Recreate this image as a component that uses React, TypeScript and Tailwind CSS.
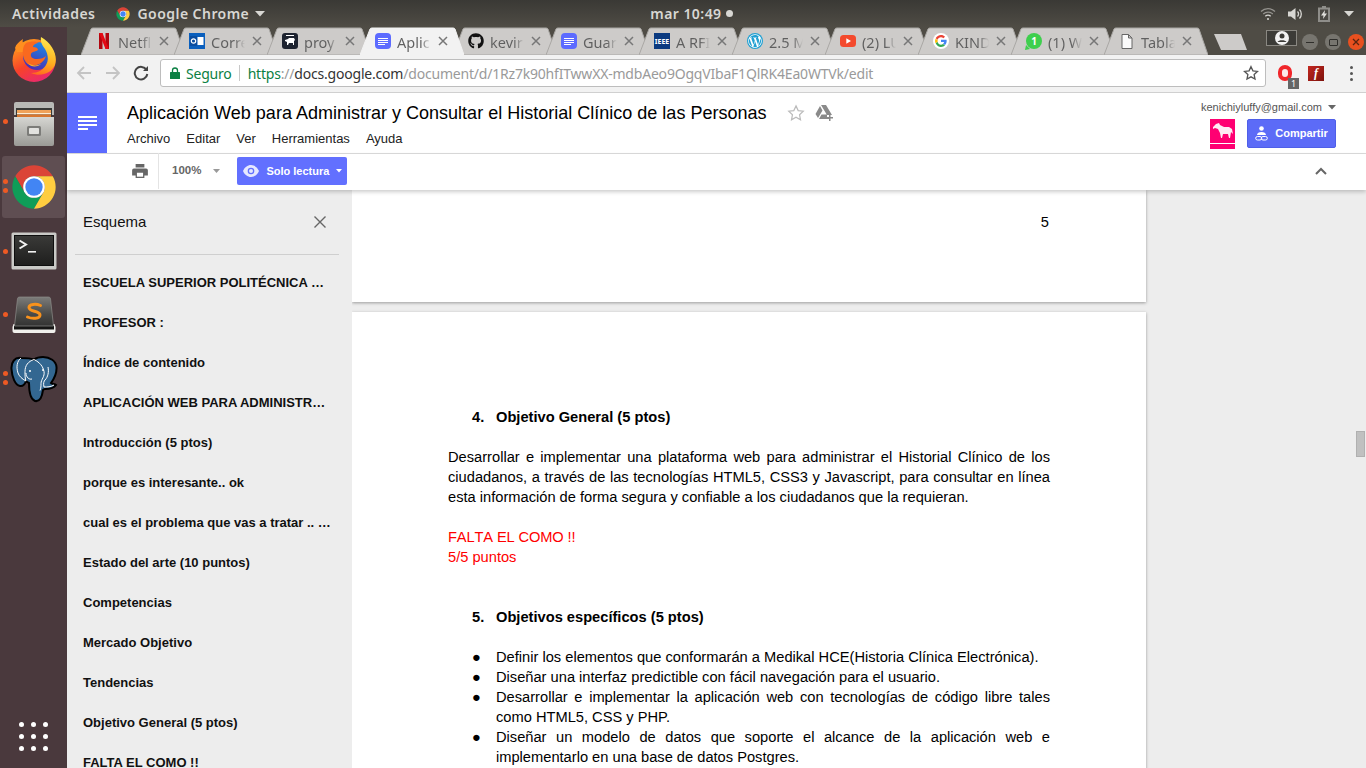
import type { ReactNode } from "react";
import { FaGithub, FaWordpressSimple } from "react-icons/fa";

const ui = "font-['Noto_Sans',sans-serif]";
const arial = "font-['Liberation_Sans',Arial,sans-serif]";

function ChromeLogo({ size }: { size: number }) {
  return (
    <svg width={size} height={size} viewBox="0 0 48 48">
      <path fill="#db4437" d="M6.68 14A20 20 0 0 1 41.32 14H24a10 10 0 0 0-8.66 15z" />
      <path fill="#0f9d58" d="M6.68 14A20 20 0 0 0 24 44l8.66-15A10 10 0 0 1 15.34 29z" />
      <path fill="#ffcd40" d="M41.32 14A20 20 0 0 1 24 44l8.66-15A10 10 0 0 0 24 14z" />
      <circle cx="24" cy="24" r="10" fill="#fff" />
      <circle cx="24" cy="24" r="8" fill="#4285f4" />
    </svg>
  );
}

function Firefox() {
  return (
    <svg width="46" height="46" viewBox="0 0 46 46">
      <defs>
        <linearGradient id="ff1" x1="0.1" y1="0.1" x2="0.6" y2="1">
          <stop offset="0" stopColor="#ff9f1c" />
          <stop offset="0.55" stopColor="#f8422a" />
          <stop offset="1" stopColor="#ea2a6b" />
        </linearGradient>
        <linearGradient id="ff2" x1="0.5" y1="0" x2="0.3" y2="1">
          <stop offset="0" stopColor="#ffe84f" />
          <stop offset="0.6" stopColor="#ffb01f" />
          <stop offset="1" stopColor="#ff6a1f" />
        </linearGradient>
        <linearGradient id="ff3" x1="0.7" y1="0" x2="0.3" y2="1">
          <stop offset="0" stopColor="#1e8be6" />
          <stop offset="1" stopColor="#4b2bb0" />
        </linearGradient>
      </defs>
      <circle cx="23" cy="24.500" r="21.500" fill="url(#ff1)" />
      <path fill="#ff8f1f" d="M4 12c1-4 4-6 8-9-1 3 0 4 1 5 4-3 8-3 11-2l-6 10H6z" />
      <circle cx="26" cy="20" r="14" fill="url(#ff3)" />
      <path fill="#f9691f" d="M15 7c5-2 10-2 13 0-3 0-6 2-6 4 3 0 5 1 5 3-2 2-6 1-7 4-1 3 2 5 6 5 4 0 7-1 9-3-2 7-10 11-16 9C12 27 9 13 15 7z" />
      <path fill="url(#ff2)" d="M30 1c-1 6 2 9 4 12 3 5 4 11 1 16-3 5-8 8-15 8 9 4 20 1 24-8 3-9-2-21-14-28z" />
      <path fill="#ffb31f" d="M17 27c4 3 9 3 13 1-3 3-10 4-13-1z" />
    </svg>
  );
}

function FilesIcon() {
  return (
    <svg width="42" height="45" viewBox="0 0 42 45">
      <defs>
        <linearGradient id="fb" x1="0" y1="0" x2="0" y2="1">
          <stop offset="0" stopColor="#d6d6d2" />
          <stop offset="1" stopColor="#9a9a96" />
        </linearGradient>
      </defs>
      <path d="M1 3a2 2 0 0 1 2-2h36a2 2 0 0 1 2 2v11H1z" fill="#b9b9b6" />
      <rect x="3" y="7" width="36" height="9" fill="#3a3a38" />
      <rect x="4" y="9" width="34" height="3" fill="#f0a25a" />
      <rect x="4" y="12" width="34" height="1.500" fill="#fdeed6" />
      <rect x="4" y="13.500" width="34" height="3" fill="#d9772f" />
      <path d="M1 16h40v27a2 2 0 0 1-2 2H3a2 2 0 0 1-2-2z" fill="url(#fb)" />
      <rect x="14" y="25" width="14" height="10" rx="1.500" fill="#7c7c79" />
      <rect x="16" y="27" width="10" height="6" rx="0.800" fill="#e2e2df" />
    </svg>
  );
}

function TerminalIcon() {
  return (
    <svg width="46" height="38" viewBox="0 0 46 38">
      <defs>
        <linearGradient id="tb" x1="0" y1="0" x2="0" y2="1">
          <stop offset="0" stopColor="#3a3a38" />
          <stop offset="1" stopColor="#1e1e1d" />
        </linearGradient>
      </defs>
      <rect x="0.500" y="0.500" width="45" height="37" rx="1.500" fill="#c9c9c6" />
      <rect x="3.500" y="3.500" width="39" height="30" fill="url(#tb)" stroke="#0e0e0e" />
      <path d="M8.500 8.500l6.500 4-6.500 4" fill="none" stroke="#f2f2f2" strokeWidth="2" />
      <rect x="17" y="19" width="8" height="1.600" fill="#f2f2f2" />
    </svg>
  );
}

function SublimeIcon() {
  return (
    <svg width="44" height="38" viewBox="0 0 44 38">
      <defs>
        <linearGradient id="sb" x1="0" y1="0" x2="0" y2="1">
          <stop offset="0" stopColor="#7c7c7a" />
          <stop offset="0.6" stopColor="#4a4a48" />
          <stop offset="1" stopColor="#333332" />
        </linearGradient>
      </defs>
      <path d="M.5 31l1-3h41l1 3v4a2 2 0 0 1-2 2h-39a2 2 0 0 1-2-2z" fill="#f0f0ec" />
      <path d="M2 30h40v3.500H2z" fill="#161615" />
      <path d="M5.500 2.500a2 2 0 0 1 2-1.500h29a2 2 0 0 1 2 1.500L41.500 30h-39z" fill="url(#sb)" stroke="#8c8c8a" strokeWidth="0.700" />
      <path d="M28.500 9.500c-4.500-2-11.500-1.500-11.500 2 0 4.500 11 3 11 7.500 0 4-8 4-12.500 2" fill="none" stroke="#f9921c" strokeWidth="3" strokeLinecap="round" />
    </svg>
  );
}

function PostgresIcon() {
  return (
    <svg width="48" height="48" viewBox="0 0 48 48">
      <path
        d="M11 3C5 2 1 7 1.500 14 2 22 5 30 10 31c3 .5 5-2 6-5 1 1 2 1.500 3 2 0 8 1 16 6 18 5 1 7-4 8-11 .5-1 1-1 2-1 5 0 9-1 11-4-1-1-4-1-5-2 3-4 6-9 5.500-16C46 6 40 2 33 2c-4 0-7 1-9 2.500C20 3 15 3 11 3z"
        fill="#336791"
        stroke="#000"
        strokeWidth="2"
      />
      <path
        d="M24 4.500c-6 2-9 6-9 12 0 4 0 7 1 9.500M24 4.500c6 3 9 7 10 12 1 5-3 8-3 12 0 2 0 5-1 7M16 18c0 4 3 7 6 6M38 12c1 5 0 10-3 13-1 1-2 3-1 7 3 0 7 0 10-2M11 3C7 6 6 12 8 18c1 3 4 6 8 8"
        fill="none"
        stroke="#fff"
        strokeWidth="1"
      />
      <circle cx="20" cy="16" r="1" fill="#fff" />
      <circle cx="33" cy="15" r="1" fill="#fff" />
    </svg>
  );
}

function DocsIcon() {
  return (
    <span className="flex h-4 w-4 flex-col items-start justify-center gap-px rounded-sm bg-[#5c6bff] pl-[3px]">
      <span className="h-px w-[10px] bg-white" />
      <span className="h-px w-[10px] bg-white" />
      <span className="h-px w-[10px] bg-white" />
      <span className="h-px w-[7px] bg-white" />
    </span>
  );
}

function GoogleG() {
  return (
    <svg width="16" height="16" viewBox="0 0 48 48">
      <circle cx="24" cy="24" r="24" fill="#fff" />
      <path fill="#ea4335" d="M24 13c3 0 5 1 7 3l5-5c-3-3-7-5-12-5-7 0-13 4-16 10l6 4c1-4 5-7 10-7z" />
      <path fill="#4285f4" d="M41 24c0-1 0-3-.4-4H24v7h9.500c-.5 2-1.500 4-3.500 5l6 4c3-3 5-7 5-12z" />
      <path fill="#fbbc05" d="M14 27c-.5-2-.5-4 0-6l-6-4c-2.500 4-2.500 10 0 14z" />
      <path fill="#34a853" d="M24 42c5 0 9-2 12-5l-6-4c-2 1-3.500 2-6 2-5 0-9-3-10-8l-6 4c3 7 9 11 16 11z" />
    </svg>
  );
}

const tabs: { title: string; icon: ReactNode; active?: boolean }[] = [
  {
    title: "Netfl",
    icon: (
      <svg width="10" height="16" viewBox="0 0 10 16">
        <path fill="#b1060f" d="M0 0h3.500v16L0 16.400zM6.500 0H10v16.400L6.500 16z" />
        <path fill="#e50914" d="M0 0h3.500L10 16.400 6.500 16z" />
      </svg>
    ),
  },
  {
    title: "Corre",
    icon: (
      <svg width="16" height="16" viewBox="0 0 16 16">
        <rect width="16" height="16" fill="#0a5fbd" />
        <rect x="8.500" y="4" width="6" height="8" fill="#fff" />
        <rect x="1" y="3" width="7" height="10" fill="#0a4da0" />
        <circle cx="4.500" cy="8" r="2.200" fill="none" stroke="#fff" strokeWidth="1.200" />
      </svg>
    ),
  },
  {
    title: "proy",
    icon: (
      <svg width="16" height="16" viewBox="0 0 16 16">
        <rect width="16" height="16" rx="3" fill="#1d2330" />
        <path fill="#fff" d="M3 7l3-1 1-1 5 0 1 2-1 1 0 4-1 0 0-2-4 0-1 2-1 0 0-3-2-1zM4 2h8v1H4z" />
      </svg>
    ),
  },
  { title: "Aplic", icon: <DocsIcon />, active: true },
  { title: "kevir", icon: <FaGithub size={16} color="#111" /> },
  { title: "Guar", icon: <DocsIcon /> },
  {
    title: "A RFI",
    icon: (
      <span className="flex h-4 w-4 items-center justify-center bg-[#0b3a80] text-[7px] font-bold leading-none text-white">
        IEEE
      </span>
    ),
  },
  {
    title: "2.5 M",
    icon: (
      <span className="flex h-4 w-4 items-center justify-center rounded-full bg-[#21a0d2]">
        <FaWordpressSimple size={14} color="#fff" />
      </span>
    ),
  },
  {
    title: "(2) LU",
    icon: (
      <svg width="16" height="16" viewBox="0 0 16 16">
        <rect y="2" width="16" height="12" rx="3.500" fill="#f44a2d" />
        <path d="M6.300 5.300v5.400L11 8z" fill="#fff" />
      </svg>
    ),
  },
  { title: "KIND", icon: <GoogleG /> },
  {
    title: "(1) W",
    icon: (
      <span className="relative flex h-4 w-4 items-center justify-center rounded-full bg-[#3ecf4d] text-[10px] font-bold leading-none text-white">
        <svg className="absolute -bottom-px -left-px" width="6" height="6" viewBox="0 0 6 6">
          <path d="M0 6l1-5 4 4z" fill="#3ecf4d" />
        </svg>
        <span className="relative">1</span>
      </span>
    ),
  },
  {
    title: "Tabla",
    icon: (
      <svg width="12" height="15" viewBox="0 0 12 15">
        <path d="M1 .5h6.500L11 4v10.500H1zM7.500.5V4H11" fill="#fafafa" stroke="#666" />
      </svg>
    ),
  },
];

function Tab({ title, icon, active }: { title: string; icon: ReactNode; active?: boolean }) {
  return (
    <div className={`relative -mr-[11px] flex h-[28px] w-[104px] shrink-0 items-center pl-[15px] ${active ? "z-10" : ""}`}>
      <svg className="absolute inset-0" width="104" height="28" viewBox="0 0 104 28">
        <path
          d="M0 28L10 2Q10.500 1 12 1H93Q94.500 1 95 2L104 28z"
          fill={active ? "#f2f2f2" : "#cdcbc9"}
          stroke={active ? "#f2f2f2" : "#a9a7a4"}
          strokeWidth="1"
        />
      </svg>
      <span className="relative flex w-4 justify-center">{icon}</span>
      <span
        className={`relative ml-[6px] w-[34px] whitespace-nowrap bg-linear-to-r from-[#5f5f5f] from-70% to-transparent bg-clip-text pt-px text-[14.500px] leading-5 text-transparent ${ui}`}
      >
        {title}
      </span>
      <svg className="relative ml-[7px]" width="10" height="10" viewBox="0 0 10 10">
        <path d="M1 1l8 8M9 1l-8 8" stroke="#777" strokeWidth="1.500" />
      </svg>
    </div>
  );
}

function TopBar() {
  return (
    <div className={`flex h-[27px] shrink-0 items-center bg-linear-to-b from-[#3a3935] to-[#4f4c45] pl-3 pr-[12px] text-[14px] font-semibold tracking-[0.45px] text-[#d8d7d3] ${ui}`}>
      <span>Actividades</span>
      <span className="ml-[20px] flex items-center gap-[6px]">
        <ChromeLogo size={16} />
        Google Chrome
        <svg width="10" height="6" viewBox="0 0 10 6">
          <path d="M0 0h10L5 5.500z" fill="#d8d7d3" />
        </svg>
      </span>
      <span className="ml-[385px] flex items-center gap-[4px]">
        mar 10:49
        <span className="h-[7px] w-[7px] rounded-full bg-[#d8d7d3]" />
      </span>
      <span className="ml-auto flex items-center">
        <svg width="16" height="14" viewBox="0 0 16 14" fill="none" stroke="#d8d7d3" strokeWidth="1.300">
          <path d="M1 4.500a10 10 0 0 1 14 0M3.200 7a7 7 0 0 1 9.600 0" opacity="0.55" />
          <path d="M5.300 9.300a4 4 0 0 1 5.400 0" />
          <circle cx="8" cy="12" r="1" fill="#d8d7d3" stroke="none" />
        </svg>
        <svg className="ml-[12px]" width="16" height="14" viewBox="0 0 16 14">
          <path d="M0 4.500h3L7.500 1v12L3 9.500H0z" fill="#d8d7d3" />
          <path d="M9.500 4.500a3.500 3.500 0 0 1 0 5M11.500 2.500a6.500 6.500 0 0 1 0 9" fill="none" stroke="#d8d7d3" strokeWidth="1.300" />
        </svg>
        <svg className="ml-[14px]" width="12" height="16" viewBox="0 0 12 16">
          <path d="M4 0h4v1.500h4V16H0V1.500h4z" fill="#8f8e8a" />
          <path d="M2 3.500h8v10.500H2z" fill="#4b4944" />
          <path d="M7 4L3 9.500h2.500L5 13l4-5.500H6.500z" fill="#e0dfdb" />
        </svg>
        <svg className="ml-[14px]" width="10" height="6" viewBox="0 0 10 6">
          <path d="M0 0h10L5 5.500z" fill="#d8d7d3" />
        </svg>
      </span>
    </div>
  );
}

function Dock() {
  const slot = "relative flex h-16 shrink-0 items-center justify-center";
  const dot = "absolute left-[3px] h-[5px] w-[5px] rounded-full bg-[#ee5a24]";
  return (
    <div className="flex w-[67px] shrink-0 flex-col bg-[#4a393d]">
      <div className={slot}>
        <Firefox />
      </div>
      <div className={slot}>
        <FilesIcon />
        <span className={`${dot} top-[28px]`} />
      </div>
      <div className={slot}>
        <div className="absolute inset-x-[2px] inset-y-px rounded-[3px] bg-[#5f4e52]" />
        <span className="relative flex">
          <ChromeLogo size={52} />
        </span>
        <span className={`${dot} top-[24px]`} />
        <span className={`${dot} top-[33px]`} />
      </div>
      <div className={slot}>
        <TerminalIcon />
        <span className={`${dot} top-[30px]`} />
      </div>
      <div className={slot}>
        <SublimeIcon />
        <span className={`${dot} top-[29px]`} />
      </div>
      <div className={slot}>
        <PostgresIcon />
        <span className={`${dot} top-[24px]`} />
        <span className={`${dot} top-[33px]`} />
      </div>
      <div className="mb-[17px] mt-auto grid grid-cols-3 gap-[7px] self-center">
        {Array.from({ length: 9 }).map((_, i) => (
          <span key={i} className="h-[5px] w-[5px] rounded-full bg-white" />
        ))}
      </div>
    </div>
  );
}

function TabStrip() {
  return (
    <div className="flex h-[28px] shrink-0 items-end bg-[#4f4c45] pl-[14px]">
      {tabs.map((t) => (
        <Tab key={t.title} {...t} />
      ))}
      <svg className="mb-[5px] ml-[17px]" width="33" height="16" viewBox="0 0 33 16">
        <path d="M0 0h27l6 16H7z" fill="#cdcbc9" />
      </svg>
      <div className="mb-[9px] ml-[19px] flex h-[16px] w-[31px] items-center justify-center border border-[#8a8882] bg-[#3c3b37]">
        <svg width="14" height="14" viewBox="0 0 14 14">
          <circle cx="7" cy="7" r="7" fill="#f2f2f2" />
          <circle cx="7" cy="5" r="2.500" fill="#3c3b37" />
          <path d="M2.500 11c1-2.500 8-2.500 9 0z" fill="#3c3b37" />
        </svg>
      </div>
      <div className="mb-[5px] ml-[5px] flex items-center gap-[7px]">
        <span className="flex h-4 w-4 items-center justify-center rounded-full bg-[#77756f]">
          <span className="h-px w-2 bg-[#2f2e2b]" />
        </span>
        <span className="flex h-4 w-4 items-center justify-center rounded-full bg-[#77756f]">
          <span className="h-[7px] w-[9px] rounded-[1px] border border-[#2f2e2b]" />
        </span>
        <span className="flex h-4 w-4 items-center justify-center rounded-full bg-[#e9501f]">
          <svg width="8" height="8" viewBox="0 0 8 8">
            <path d="M1 1l6 6M7 1L1 7" stroke="#5a2410" strokeWidth="1.300" />
          </svg>
        </span>
      </div>
    </div>
  );
}

function AddressRow() {
  return (
    <div className="flex h-[38px] shrink-0 items-center border-b border-[#d0d0d0] bg-[#f2f2f2] pb-[1px]">
      <svg className="ml-[9px]" width="16" height="16" viewBox="0 0 16 16" fill="none" stroke="#c4c4c4" strokeWidth="1.800">
        <path d="M15 8H2M8 2L2 8l6 6" />
      </svg>
      <svg className="ml-[13px]" width="16" height="16" viewBox="0 0 16 16" fill="none" stroke="#c4c4c4" strokeWidth="1.800">
        <path d="M1 8h13M8 2l6 6-6 6" />
      </svg>
      <svg className="ml-[12px]" width="16" height="16" viewBox="0 0 16 16" fill="none" stroke="#444" strokeWidth="2">
        <path d="M13.500 5A6.300 6.300 0 1 0 14.300 9" />
        <path d="M15 1v5h-5z" fill="#444" stroke="none" />
      </svg>
      <div className={`ml-[11px] flex h-[28px] w-[1106px] items-center rounded-[3px] border border-[#bdbdbd] bg-white pl-[9px] text-[14px] tracking-[-0.2px] ${ui}`}>
        <svg width="10" height="12" viewBox="0 0 10 12">
          <path d="M2.500 5V3.500a2.500 2.500 0 0 1 5 0V5" fill="none" stroke="#0b8043" strokeWidth="1.300" />
          <rect y="5" width="10" height="7" rx="0.500" fill="#0b8043" />
        </svg>
        <span className="ml-[6px] text-[#0b8043]">Seguro</span>
        <span className="ml-[7px] h-[16px] w-px bg-[#c8c8c8]" />
        <span className="ml-[8px] whitespace-nowrap">
          <span className="text-[#0b8043]">https</span>
          <span className="text-[#9a9a9a]">://</span>
          <span className="text-[#333]">docs.google.com</span>
          <span className="text-[#9a9a9a]">/document/d/1Rz7k90hfITwwXX-mdbAeo9OgqVIbaF1QlRK4Ea0WTVk/edit</span>
        </span>
        <svg className="ml-auto mr-[6px]" width="16" height="16" viewBox="0 0 24 24" fill="none" stroke="#555" strokeWidth="2">
          <path d="M12 2.500l2.900 6.300 6.800.8-5 4.700 1.300 6.800-6-3.400-6 3.400 1.300-6.800-5-4.700 6.800-.8z" />
        </svg>
      </div>
      <span className="relative ml-[9px] flex h-5 w-5 items-center justify-center">
        <span className="h-[16px] w-[14px] rounded-full border-[4px] border-[#f0262b] bg-[#fbe9e9]" />
        <span className={`absolute -bottom-[6px] right-[-4px] flex h-[11px] w-[11px] items-center justify-center bg-[#666] text-[9px] leading-none text-white ${ui}`}>
          1
        </span>
      </span>
      <span className="ml-[13px] flex h-[15px] w-[16px] items-center justify-center bg-linear-to-br from-[#c4271f] to-[#7d120d] text-[12px] font-bold italic leading-none text-white font-['Liberation_Serif',serif]">
        f
      </span>
      <span className="ml-[26px] flex flex-col gap-[3px]">
        <span className="h-[3px] w-[3px] rounded-full bg-[#555]" />
        <span className="h-[3px] w-[3px] rounded-full bg-[#555]" />
        <span className="h-[3px] w-[3px] rounded-full bg-[#555]" />
      </span>
    </div>
  );
}

function DocsHeader() {
  return (
    <div className={`flex h-[61px] shrink-0 border-b border-[#dcdcdc] bg-white ${arial}`}>
      <div className="flex w-10 flex-col items-start justify-center gap-[2px] bg-[#5c6bff] pl-[11px]">
        <span className="h-[2px] w-[19px] bg-white" />
        <span className="h-[2px] w-[19px] bg-white" />
        <span className="h-[2px] w-[19px] bg-white" />
        <span className="h-[2px] w-[10px] bg-white" />
      </div>
      <div className="ml-5 flex flex-col pt-[8px]">
        <div className="flex items-center">
          <span className="whitespace-nowrap text-[18.030px] leading-6 text-black">
            Aplicación Web para Administrar y Consultar el Historial Clínico de las Personas
          </span>
          <svg className="ml-[20px]" width="18" height="18" viewBox="0 0 24 24" fill="none" stroke="#bbb" strokeWidth="1.600">
            <path d="M12 2.500l2.900 6.300 6.800.8-5 4.700 1.300 6.800-6-3.400-6 3.400 1.300-6.800-5-4.700 6.800-.8z" />
          </svg>
          <svg className="ml-[10px]" width="18" height="16" viewBox="0 0 18 16">
            <path d="M6 0h5l6 10h-5zM5 1l2.500 4.500L3 13 .5 9zM4 14l2.500-4.500H12v2.500h2v2z" fill="#8a8a8a" />
            <path d="M14 9h1.500v3H18v1.500h-2.500V16H14v-2.500h-2.500V12H14z" fill="#8a8a8a" />
          </svg>
        </div>
        <div className="mt-[6px] flex gap-[16px] text-[13px] leading-4 text-[#222]">
          <span>Archivo</span>
          <span>Editar</span>
          <span>Ver</span>
          <span>Herramientas</span>
          <span>Ayuda</span>
        </div>
      </div>
      <div className="ml-auto mr-[30px] flex flex-col items-end pt-[7px]">
        <div className="flex items-center gap-[6px] text-[11px] leading-[14px] text-[#555]">
          kenichiyluffy@gmail.com
          <svg width="8" height="5" viewBox="0 0 8 5">
            <path d="M0 0h8L4 4.500z" fill="#666" />
          </svg>
        </div>
        <div className="mt-[5px] flex items-start gap-[12px]">
          <div className="relative h-[30px] w-[25px] bg-[#ff0072]">
            <span className="absolute inset-x-0 top-[24px] h-px bg-white" />
            <svg className="absolute left-[3px] top-[4px]" width="20" height="15" viewBox="0 0 20 15">
              <path fill="#fff" fillOpacity="0.92" d="M0 4l3-3 3-1 1 2 4 2 5 0 3 2 1 5-2-2-1 6-1 0-1-4-5 0-1 4-1 0-1-5-2-4-3-1-2 1z" />
            </svg>
          </div>
          <div className="flex h-[29px] w-[89px] items-center justify-center gap-[7px] rounded-[2px] border border-[#4f5fe8] bg-[#5c6bf7] text-[11px] font-bold text-white">
            <svg width="13" height="15" viewBox="0 0 13 15" fill="none">
              <circle cx="6.500" cy="2.500" r="2.300" fill="#fff" />
              <path d="M2 9c0-2 2-3 4.500-3S11 7 11 9z" fill="#fff" />
              <rect x="0.700" y="10.500" width="6" height="3.500" rx="1.700" stroke="#fff" />
              <rect x="6.300" y="10.500" width="6" height="3.500" rx="1.700" stroke="#fff" />
            </svg>
            Compartir
          </div>
        </div>
      </div>
    </div>
  );
}

function DocsToolbar() {
  return (
    <div className={`relative z-20 flex h-[36px] shrink-0 items-center bg-white pb-[2px] shadow-[0_2px_4px_rgba(0,0,0,0.2)] ${arial}`}>
      <svg className="ml-[65px]" width="16" height="14" viewBox="0 0 18 16">
        <path d="M4 0h10v4H4zM2 5h14a2 2 0 0 1 2 2v6h-4v3H4v-3H0V7a2 2 0 0 1 2-2z" fill="#666" />
        <rect x="5.500" y="10" width="7" height="4.500" fill="#fff" />
      </svg>
      <span className="ml-[10px] h-[36px] w-px bg-[#e4e4e4]" />
      <span className="ml-[13px] text-[11.500px] font-bold text-[#666]">100%</span>
      <svg className="ml-[12px]" width="7" height="4" viewBox="0 0 7 4">
        <path d="M0 0h7L3.500 4z" fill="#999" />
      </svg>
      <div className="ml-[17px] flex h-[28px] w-[110px] items-center rounded-[2px] bg-[#6270ff] pl-[6px] text-[11px] font-bold text-white">
        <svg width="16" height="12" viewBox="0 0 16 12">
          <path d="M8 0C4.500 0 1.500 2.500 0 6c1.500 3.500 4.500 6 8 6s6.500-2.500 8-6c-1.500-3.500-4.500-6-8-6z" fill="#e6e8ff" />
          <circle cx="8" cy="6" r="3.300" fill="#6270ff" />
          <circle cx="8" cy="6" r="2" fill="#e6e8ff" />
        </svg>
        <span className="ml-[7px]">Solo lectura</span>
        <svg className="ml-[7px]" width="6" height="4" viewBox="0 0 6 4">
          <path d="M0 0h6L3 3.500z" fill="#fff" />
        </svg>
      </div>
      <svg className="ml-auto mr-[39px]" width="12" height="8" viewBox="0 0 12 8" fill="none" stroke="#666" strokeWidth="2">
        <path d="M1 7l5-5 5 5" />
      </svg>
    </div>
  );
}

const outline = [
  "ESCUELA SUPERIOR POLITÉCNICA …",
  "PROFESOR :",
  "Índice de contenido",
  "APLICACIÓN WEB PARA ADMINISTR…",
  "Introducción (5 ptos)",
  "porque es interesante.. ok",
  "cual es el problema que vas a tratar .. …",
  "Estado del arte (10 puntos)",
  "Competencias",
  "Mercado Objetivo",
  "Tendencias",
  "Objetivo General (5 ptos)",
  "FALTA EL COMO !!",
];

function Sidebar() {
  return (
    <div className={`w-[285px] shrink-0 overflow-hidden bg-[#ededed] ${arial}`}>
      <div className="ml-[8px] mr-[13px] flex h-[65px] items-center justify-between border-b border-[#cfcfcf] pl-[8px] pr-[13px]">
        <span className="text-[15px] text-[#111]">Esquema</span>
        <svg width="12" height="12" viewBox="0 0 12 12">
          <path d="M.5.500l11 11M11.500.500l-11 11" stroke="#666" strokeWidth="1.400" />
        </svg>
      </div>
      <div className="flex flex-col gap-[24px] pl-[16px] pt-[20px]">
        {outline.map((item) => (
          <div key={item} className="whitespace-nowrap text-[13px] font-bold leading-4 text-[#111]">
            {item}
          </div>
        ))}
      </div>
    </div>
  );
}

const bullets = [
  "Definir los elementos que conformarán a Medikal HCE(Historia Clínica Electrónica).",
  "Diseñar una interfaz predictible con fácil navegación para el usuario.",
  "Desarrollar e implementar la aplicación web con tecnologías de código libre tales como HTML5, CSS y PHP.",
  "Diseñar un modelo de datos que soporte el alcance de la aplicación web e implementarlo en una base de datos Postgres.",
];

function Heading({ n, children }: { n: string; children: ReactNode }) {
  return (
    <div className="flex pl-[24px] font-bold">
      <span className="w-[24px]">{n}</span>
      <span>{children}</span>
    </div>
  );
}

function DocArea() {
  return (
    <div className={`relative flex-1 overflow-hidden bg-[#ededed] text-[14.670px] leading-5 text-black ${arial}`}>
      <div className="flex h-[112px] w-[794px] justify-end bg-white pr-[97px] pt-[22px] shadow-[0_1px_3px_rgba(0,0,0,0.35)]">
        5
      </div>
      <div className="mt-[10px] w-[794px] bg-white pb-[100px] pl-[96px] pr-[96px] pt-[95px] shadow-[0_1px_3px_rgba(0,0,0,0.35)]">
        <Heading n="4.">Objetivo General (5 ptos)</Heading>
        <p className="mt-5 text-justify">
          Desarrollar e implementar una plataforma web para administrar el Historial Clínico de los ciudadanos, a través de las tecnologías HTML5, CSS3 y Javascript, para consultar en línea esta información de forma segura y confiable a los ciudadanos que la requieran.
        </p>
        <p className="mt-5 text-[#ff0000]">
          <span className="tracking-[-0.13px] [font-kerning:none]">FALTA EL COMO !!</span>
          <br />
          5/5 puntos
        </p>
        <div className="mt-10">
          <Heading n="5.">Objetivos específicos (5 ptos)</Heading>
        </div>
        <ul className="mt-5">
          {bullets.map((b) => (
            <li key={b} className="flex pl-[24px]">
              <span className="w-[24px] shrink-0">●</span>
              <span className="text-justify">{b}</span>
            </li>
          ))}
        </ul>
      </div>
      <div className="absolute right-px top-[241px] h-[26px] w-[9px] border border-[#b0b0b0] bg-[#c0c0c0]" />
    </div>
  );
}

export default function App() {
  return (
    <div className="flex h-[768px] w-[1366px] flex-col overflow-hidden">
      <TopBar />
      <div className="flex min-h-0 flex-1">
        <Dock />
        <div className="flex min-w-0 flex-1 flex-col">
          <TabStrip />
          <AddressRow />
          <DocsHeader />
          <DocsToolbar />
          <div className="flex min-h-0 flex-1">
            <Sidebar />
            <DocArea />
          </div>
        </div>
      </div>
    </div>
  );
}
